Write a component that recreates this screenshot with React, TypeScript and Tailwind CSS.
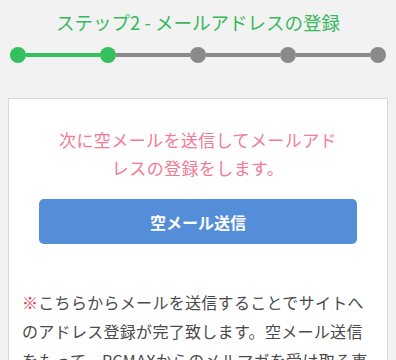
import React from "react";

const font = { fontFamily: '"Noto Sans CJK JP", "Noto Sans", sans-serif' };

function Dot({ active }: { active: boolean }) {
  return (
    <div
      className={`w-[16px] h-[16px] rounded-full shrink-0 ${active ? "bg-[#35bf5d]" : "bg-[#8a8a8a]"}`}
    />
  );
}

function Line({ active }: { active: boolean }) {
  return <div className={`flex-1 h-[4px] ${active ? "bg-[#35bf5d]" : "bg-[#8a8a8a]"}`} />;
}

export default function App() {
  return (
    <div className="min-h-screen bg-[#f2f2f2]" style={font}>
      <div className="pt-[8px] text-center text-[18.5px] leading-[28px] text-[#37b95c]">
        ステップ2 - メールアドレスの登録
      </div>
      <div className="flex items-center px-[10px] mt-[11px]">
        <Dot active />
        <Line active />
        <Dot active />
        <Line active={false} />
        <Dot active={false} />
        <Line active={false} />
        <Dot active={false} />
        <Line active={false} />
        <Dot active={false} />
      </div>
      <div className="mx-[8px] mt-[35px] bg-white border border-[#d8d8d8] pb-[30px]">
        <div className="pt-[27px] px-[44px] text-center text-[17px] leading-[28px] tracking-[0.4px] text-[#f27b93]">
          次に空メールを送信してメールアドレスの登録をします。
        </div>
        <div className="mx-[30px] mt-[17px] h-[45px] rounded-[5px] bg-[#548dd8] flex items-center justify-center text-white font-bold text-[16px]">
          空メール送信
        </div>
        <p className="mt-[44px] pl-[13px] pr-[15px] text-[16px] leading-[29px] tracking-[0.3px] text-[#4a4a4a]">
          <span className="text-[#e8334a]">※</span>こちらからメールを送信することでサイトへのアドレス登録が完了致します。空メール送信をもって、PCMAXからのメルマガを受け取る事に同意したものとみなします。
        </p>
      </div>
    </div>
  );
}
